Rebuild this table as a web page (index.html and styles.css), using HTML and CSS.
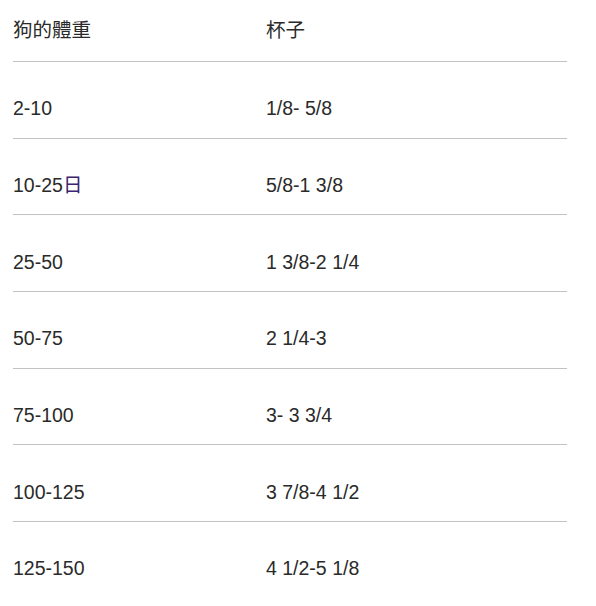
FILE: index.html
```html
<!DOCTYPE html>
<html lang="zh-Hant">
<head>
<meta charset="utf-8">
<link rel="stylesheet" href="styles.css">
</head>
<body>
<table class="feed-table">
  <thead>
    <tr class="head-row"><th class="col-weight">狗的體重</th><th>杯子</th></tr>
  </thead>
  <tbody>
    <tr><td>2-10</td><td>1/8- 5/8</td></tr>
    <tr><td>10-25<span class="mark">日</span></td><td>5/8-1 3/8</td></tr>
    <tr><td>25-50</td><td>1 3/8-2 1/4</td></tr>
    <tr><td>50-75</td><td>2 1/4-3</td></tr>
    <tr><td>75-100</td><td>3- 3 3/4</td></tr>
    <tr><td>100-125</td><td>3 7/8-4 1/2</td></tr>
    <tr class="last"><td>125-150</td><td>4 1/2-5 1/8</td></tr>
  </tbody>
</table>
</body>
</html>
```
FILE: styles.css
```css
html, body {
  margin: 0;
  padding: 0;
  background: #ffffff;
}
body {
  font-family: "Liberation Sans", Arial, "Noto Sans CJK TC", sans-serif;
  font-size: 19.5px;
  color: #2a2a2a;
}
.feed-table {
  margin-left: 13px;
  width: 554px;
  border-collapse: collapse;
  border-spacing: 0;
}
.feed-table th,
.feed-table td {
  text-align: left;
  font-weight: normal;
  line-height: 22px;
  padding: 35.25px 0 18.42px 0;
  vertical-align: top;
  white-space: nowrap;
}
.feed-table th {
  padding: 19.25px 0 19.75px 0;
}
.col-weight {
  width: 253px;
}
.feed-table tr {
  border-bottom: 1px solid #c2c2c2;
}
.feed-table tr.last {
  border-bottom: none;
}
.mark {
  color: #3c2470;
}
```
